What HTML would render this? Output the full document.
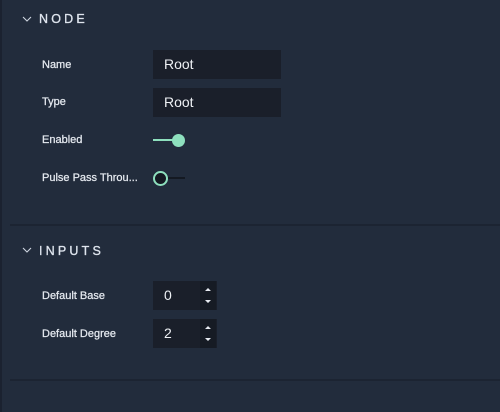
<!DOCTYPE html><html><head><style>
body{margin:0;width:500px;height:412px;background:#222c3c;font-family:"Liberation Sans",sans-serif;position:relative;overflow:hidden}
.a{position:absolute}
.edge{left:0;top:0;width:2px;height:412px;background:#1b2230}
.h{font-size:12.5px;letter-spacing:3.2px;color:#dfe5ee;-webkit-text-stroke:0.3px #dfe5ee}
.l{font-size:11px;color:#e6eaf0;left:42px;-webkit-text-stroke:0.25px #e6eaf0}
.f{background:#1a1f2a;color:#eef1f5;font-size:14px;line-height:29px;padding-left:11px;box-sizing:border-box}
.sep{left:10px;right:0;height:2px;background:#1c2432}
.sp{background:#161b24;width:16px}
</style></head><body>
<div class="a edge"></div>
<svg class="a" style="left:22px;top:15px" width="10" height="8"><path d="M1 2 L5 6 L9 2" stroke="#cfd6e0" stroke-width="1.1" fill="none"/></svg>
<div class="a h" style="left:39px;top:12px">NODE</div>
<div class="a l" style="top:59px">Name</div>
<div class="a f" style="left:153px;top:50px;width:128px;height:29px">Root</div>
<div class="a l" style="top:96px">Type</div>
<div class="a f" style="left:153px;top:88px;width:128px;height:29px">Root</div>
<div class="a l" style="top:134px">Enabled</div>
<div class="a" style="left:153px;top:139px;width:22px;height:2px;background:#8ee0be"></div>
<div class="a" style="left:172px;top:134px;width:13px;height:13px;border-radius:50%;background:#8ee0be"></div>
<div class="a l" style="top:172px">Pulse Pass Throu...</div>
<div class="a" style="left:165px;top:177px;width:20px;height:2px;background:#141922"></div>
<div class="a" style="left:153px;top:171px;width:11px;height:11px;border-radius:50%;background:#141922;border:2px solid #8ee0be"></div>
<div class="a sep" style="top:224px"></div>
<svg class="a" style="left:22px;top:246px" width="10" height="8"><path d="M1 2 L5 6 L9 2" stroke="#cfd6e0" stroke-width="1.1" fill="none"/></svg>
<div class="a h" style="left:39px;top:244px">INPUTS</div>
<div class="a l" style="top:290px">Default Base</div>
<div class="a f" style="left:153px;top:281px;width:64px;height:29px">0</div>
<div class="a sp" style="left:200px;top:281px;height:29px"></div>
<svg class="a" style="left:200px;top:281px" width="16" height="29"><path d="M5 10 L8 7 L11 10Z M5 19 L8 22 L11 19Z" fill="#e6eaf0"/></svg>
<div class="a l" style="top:328px">Default Degree</div>
<div class="a f" style="left:153px;top:319px;width:64px;height:29px">2</div>
<div class="a sp" style="left:200px;top:319px;height:29px"></div>
<svg class="a" style="left:200px;top:319px" width="16" height="29"><path d="M5 10 L8 7 L11 10Z M5 19 L8 22 L11 19Z" fill="#e6eaf0"/></svg>
<div class="a sep" style="top:379px"></div>
</body></html>
